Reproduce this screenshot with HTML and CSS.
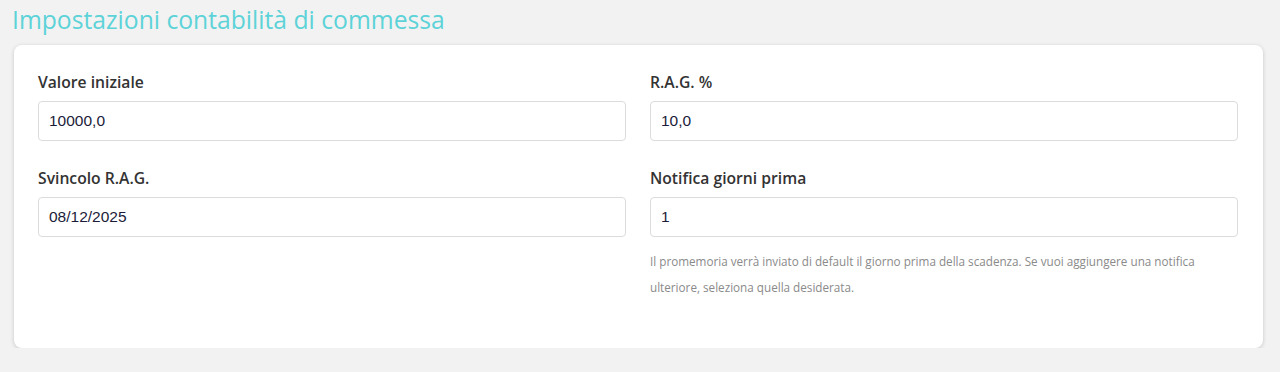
FILE: index.html
```html
<!DOCTYPE html>
<html lang="it">
<head>
<meta charset="utf-8">
<link rel="stylesheet" href="styles.css">
</head>
<body>
<div class="page">
  <h1 class="title">Impostazioni contabilità di commessa</h1>
  <div class="card">
    <div class="grid">
      <div class="field">
        <label class="label">Valore iniziale</label>
        <div class="input">10000,0</div>
      </div>
      <div class="field">
        <label class="label">R.A.G. %</label>
        <div class="input">10,0</div>
      </div>
      <div class="field">
        <label class="label">Svincolo R.A.G.</label>
        <div class="input">08/12/2025</div>
      </div>
      <div class="field">
        <label class="label">Notifica giorni prima</label>
        <div class="input">1</div>
        <p class="help">Il promemoria verrà inviato di default il giorno prima della scadenza. Se vuoi aggiungere una notifica ulteriore, seleziona quella desiderata.</p>
      </div>
    </div>
  </div>
</div>
</body>
</html>
```
FILE: styles.css
```css
html, body {
  margin: 0;
  padding: 0;
  background: #f2f2f2;
}
.page {
  padding: 4px 17px 0 14px;
  font-family: "Open Sans", Lato, sans-serif;
}
.title {
  margin: 0 0 9px -2px;
  font-size: 24.7px;
  font-weight: 400;
  line-height: 32px;
  color: #5dd3d8;
}
.card {
  background: #fff;
  border-radius: 8px;
  box-shadow: 0 1px 4px rgba(0,0,0,0.18);
  padding: 27px 25px 38px 24px;
  height: 303px;
  box-sizing: border-box;
}
.grid {
  display: grid;
  grid-template-columns: 1fr 1fr;
  column-gap: 24px;
  row-gap: 27px;
  align-items: start;
}
.field {
  display: flex;
  flex-direction: column;
}
.label {
  font-size: 15.7px;
  font-weight: 600;
  color: #333;
  line-height: 20px;
  margin-bottom: 9px;
}
.input {
  height: 40px;
  box-sizing: border-box;
  border: 1px solid #dcdcdc;
  border-radius: 4px;
  padding: 0 10px;
  display: flex;
  align-items: center;
  font-family: "Liberation Sans", Arial, sans-serif;
  font-size: 15.5px;
  color: #1c1c3a;
}
.help {
  margin: 11px 0 0;
  font-size: 11.7px;
  line-height: 26px;
  color: #8a8a8a;
  padding-right: 30px;
}
```
